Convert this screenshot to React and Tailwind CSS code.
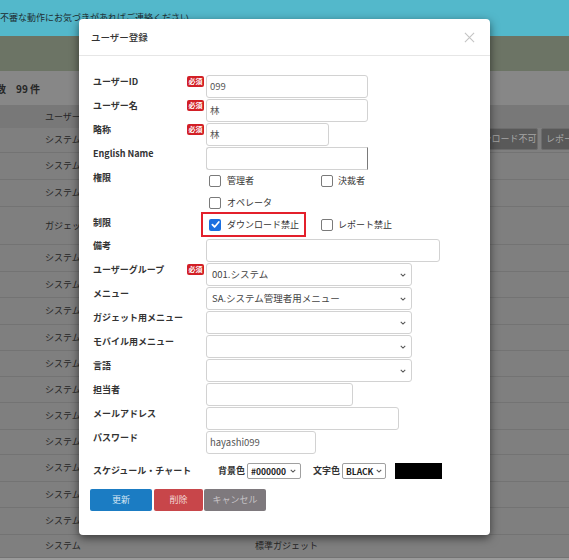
import React from "react";

const Badge = () => (
  <span className="flex items-center justify-center w-[17px] h-[11px] bg-[#d21f26] rounded-[2px] text-white text-[7px] font-bold leading-none">必須</span>
);

const Check = ({ checked }) =>
  checked ? (
    <span className="w-[12px] h-[12px] rounded-[2px] bg-[#1a6fe0] flex items-center justify-center shrink-0">
      <svg viewBox="0 0 12 12" className="w-[11px] h-[11px]">
        <path d="M2.6 6.2 L5 8.7 L9.6 3.3" stroke="white" strokeWidth="1.9" fill="none" strokeLinecap="round" strokeLinejoin="round" />
      </svg>
    </span>
  ) : (
    <span className="w-[12px] h-[12px] rounded-[2px] border border-[#7a7a7a] bg-white shrink-0" />
  );

const Chevron = () => (
  <svg viewBox="0 0 8 5" className="w-[6px] h-[4px] shrink-0">
    <path d="M1 1 L4 4 L7 1" stroke="#555" strokeWidth="1.4" fill="none" />
  </svg>
);

const Row = ({ label, req, children, className = "" }) => (
  <div className={"flex items-start " + className}>
    <div className="w-[94px] shrink-0 text-[9px] font-bold leading-[12px] pt-[1px] text-[#333]">{label}</div>
    <div className="w-[19px] shrink-0 pt-[1px] flex items-start leading-none">{req ? <Badge /> : null}</div>
    <div className="flex-1">{children}</div>
  </div>
);

const Input = ({ w, value, extra = "" }) => (
  <div className={"h-[23px] border border-[#d2d2d2] rounded-[3px] flex items-center pl-[3px] text-[9.5px] text-[#555] mb-[1px] " + w + " " + extra}>
    {value}
  </div>
);

const Select = ({ value }) => (
  <div className="h-[23px] w-[206px] border border-[#d2d2d2] rounded-[3px] flex items-center justify-between pl-[5px] pr-[5px] text-[9.5px] text-[#444] mb-[1px]">
    <span>{value}</span>
    <Chevron />
  </div>
);

const rowHeights = [27, 27, 38, 27, 26, 27, 26, 26, 26, 27, 25, 27, 26, 27, 23];
const rowLabels = ["システム", "システム", "ガジェット", "システム", "システム", "システム", "システム", "システム", "システム", "システム", "システム", "システム", "システム", "システム", "システム"];

export default function App() {
  return (
    <div className="relative w-[569px] h-[560px] overflow-hidden bg-[#858585] font-['Noto_Sans_CJK_JP',sans-serif]">
      {/* background page */}
      <div className="h-[36px] bg-[#53b8cb] flex items-start pt-[11px] text-[9px] text-[#1e2e32]">
        <span>不審な動作にお気づきがあればご連絡ください</span>
      </div>
      <div className="h-[35px] bg-[#6c7465]" />
      <div className="h-[34px] bg-[#878787] flex items-center text-[10px] font-bold text-[#262626]">
        <span className="-ml-[4px]">数　99 件</span>
      </div>
      <div className="h-[23px] bg-[#787878] flex items-center pl-[45px] text-[9px] text-[#262626]">ユーザー</div>
      <div className="h-[25px] bg-[#7f7f7f] border-b border-[#737373] flex items-start text-[9px] text-[#262626]">
        <span className="pl-[45px] pt-[5px]">システム</span>
        <div className="ml-auto -mr-[22px] flex gap-[3px]">
          <div className="w-[75px] h-[22px] bg-[#595959] border border-[#6c6c6c] rounded-[2px] flex items-center justify-center text-[9px] text-[#a5a5a5] whitespace-nowrap">ダウンロード不可</div>
          <div className="w-[50px] h-[22px] bg-[#595959] border border-[#6c6c6c] rounded-[2px] flex items-center pl-[4px] text-[9px] text-[#a5a5a5] whitespace-nowrap overflow-hidden">レポート禁止</div>
        </div>
      </div>
      {rowHeights.map((h, i) => (
        <div
          key={i}
          className="bg-[#7f7f7f] border-b border-[#737373] flex items-center text-[9px] text-[#262626]"
          style={{ height: h }}
        >
          <span className="pl-[45px] w-[255px]">{rowLabels[i]}</span>
          {i === rowHeights.length - 1 ? <span>標準ガジェット</span> : null}
        </div>
      ))}
      <div className="h-[2px] bg-[#9a9a9a]" />

      {/* modal */}
      <div className="absolute left-[79px] top-[19px] w-[411px] h-[516px] bg-white rounded-[4px] shadow-[0_3px_10px_rgba(0,0,0,0.55)] flex flex-col">
        <div className="h-[37px] shrink-0 border-b border-[#e6e6e6] flex items-center justify-between pl-[12px] pr-[15px]">
          <span className="text-[9.5px] font-medium text-[#333]">ユーザー登録</span>
          <svg viewBox="0 0 12 12" className="w-[11px] h-[11px]">
            <path d="M1 1 L11 11 M11 1 L1 11" stroke="#c4c4c4" strokeWidth="1.2" />
          </svg>
        </div>
        <div className="pl-[14px] pt-[19px] flex flex-col">
          <Row label="ユーザーID" req>
            <Input w="w-[162px]" value="099" />
          </Row>
          <Row label="ユーザー名" req>
            <Input w="w-[162px]" value="林" />
          </Row>
          <Row label="略称" req>
            <Input w="w-[123px]" value="林" />
          </Row>
          <Row label="English Name">
            <Input w="w-[162px]" value="" extra="border-r-[#7a7a7a] rounded-r-none" />
          </Row>
          <Row label="権限" className="h-[41px]">
            <div className="pt-[4px] pl-[3px] flex flex-col gap-[10px] text-[9px] text-[#333] leading-[12px]">
              <div className="flex h-[12px] items-center">
                <div className="w-[112px] flex items-center gap-[6px]"><Check /><span>管理者</span></div>
                <div className="flex items-center gap-[5px]"><Check /><span>決裁者</span></div>
              </div>
              <div className="flex h-[12px] items-center">
                <div className="flex items-center gap-[6px]"><Check /><span>オペレータ</span></div>
              </div>
            </div>
          </Row>
          <div className="flex h-[25px] mb-[2px]">
            <div className="w-[94px] shrink-0 text-[9px] font-bold leading-[12px] pt-[5px] text-[#333]">制限</div>
            <div className="w-[19px] shrink-0" />
            <div className="flex items-start text-[9px] text-[#333] leading-[12px]">
              <div className="-ml-[5px] w-[105px] h-[25px] border-2 border-[#e3202b] flex items-center pl-[6px] gap-[6px]">
                <Check checked />
                <span>ダウンロード禁止</span>
              </div>
              <div className="ml-[15px] h-[25px] flex items-center gap-[5px]">
                <Check />
                <span>レポート禁止</span>
              </div>
            </div>
          </div>
          <Row label="備考">
            <Input w="w-[234px]" value="" />
          </Row>
          <Row label="ユーザーグループ" req>
            <Select value="001.システム" />
          </Row>
          <Row label="メニュー">
            <Select value="SA.システム管理者用メニュー" />
          </Row>
          <Row label="ガジェット用メニュー">
            <Select value="" />
          </Row>
          <Row label="モバイル用メニュー">
            <Select value="" />
          </Row>
          <Row label="言語">
            <Select value="" />
          </Row>
          <Row label="担当者">
            <Input w="w-[147px]" value="" />
          </Row>
          <Row label="メールアドレス">
            <Input w="w-[193px]" value="" />
          </Row>
          <Row label="パスワード">
            <Input w="w-[110px]" value="hayashi099" />
          </Row>
          <div className="flex items-center h-[16px] mt-[8px] text-[9px] text-[#333] leading-[12px]">
            <div className="w-[125px] shrink-0 font-bold">スケジュール・チャート</div>
            <span className="font-bold">背景色</span>
            <div className="ml-[2px] w-[54px] h-[16px] border border-[#a0a0a0] rounded-[2px] flex items-center justify-between pl-[3px] pr-[4px] font-bold text-[#222] text-[8.5px]">
              <span>#000000</span>
              <Chevron />
            </div>
            <span className="ml-[12px] font-bold">文字色</span>
            <div className="ml-[2px] w-[44px] h-[16px] border border-[#a0a0a0] rounded-[2px] flex items-center justify-between pl-[3px] pr-[3px] font-bold text-[#222] text-[8.5px]">
              <span>BLACK</span>
              <Chevron />
            </div>
            <div className="ml-[9px] w-[47px] h-[16px] bg-black" />
          </div>
          <div className="flex mt-[10px] -ml-[3px] text-[9px]">
            <div className="w-[62px] h-[22px] bg-[#1b7cc3] rounded-[2px] flex items-center justify-center text-[#d6e6f4]">更新</div>
            <div className="ml-[2px] w-[49px] h-[22px] bg-[#c8464a] rounded-[2px] flex items-center justify-center text-[#f2d6d6]">削除</div>
            <div className="ml-[1px] w-[62px] h-[22px] bg-[#7e797d] rounded-[2px] flex items-center justify-center text-[#c6c2c6]">キャンセル</div>
          </div>
        </div>
      </div>
    </div>
  );
}
